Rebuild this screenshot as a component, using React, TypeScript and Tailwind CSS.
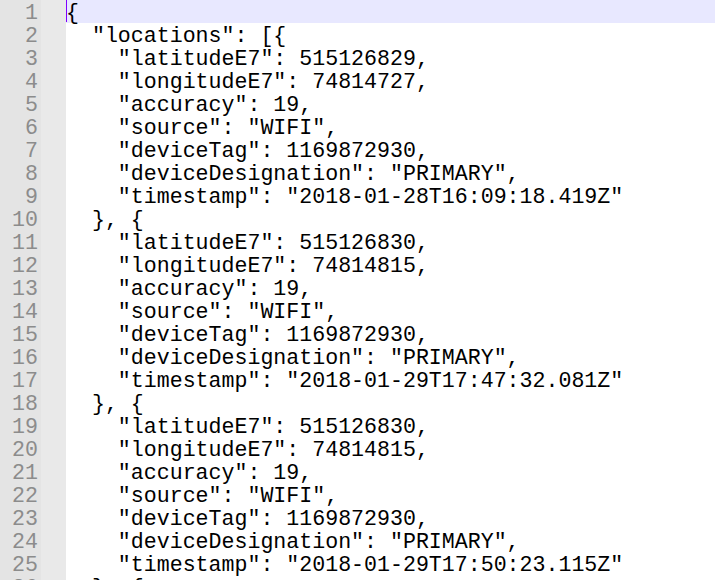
import React from "react";

const lines = [
  "{",
  '  "locations": [{',
  '    "latitudeE7": 515126829,',
  '    "longitudeE7": 74814727,',
  '    "accuracy": 19,',
  '    "source": "WIFI",',
  '    "deviceTag": 1169872930,',
  '    "deviceDesignation": "PRIMARY",',
  '    "timestamp": "2018-01-28T16:09:18.419Z"',
  "  }, {",
  '    "latitudeE7": 515126830,',
  '    "longitudeE7": 74814815,',
  '    "accuracy": 19,',
  '    "source": "WIFI",',
  '    "deviceTag": 1169872930,',
  '    "deviceDesignation": "PRIMARY",',
  '    "timestamp": "2018-01-29T17:47:32.081Z"',
  "  }, {",
  '    "latitudeE7": 515126830,',
  '    "longitudeE7": 74814815,',
  '    "accuracy": 19,',
  '    "source": "WIFI",',
  '    "deviceTag": 1169872930,',
  '    "deviceDesignation": "PRIMARY",',
  '    "timestamp": "2018-01-29T17:50:23.115Z"',
  "  }, {",
];

export default function App() {
  return (
    <div className="flex h-[580px] w-[715px] overflow-hidden bg-white font-['Liberation_Mono','Courier_New',monospace] text-[21.6px]">
      {/* line numbers */}
      <div className="flex w-[41px] shrink-0 flex-col bg-[#e4e4e4] pr-[3px] text-right text-[#8c8c8c]">
        {lines.map((_, i) => (
          <div key={i} className="h-[23px] shrink-0 pt-[4px] leading-[19px]">
            {i + 1}
          </div>
        ))}
      </div>
      {/* fold margin */}
      <div className="w-[25px] shrink-0 bg-[#e9e9e9]" />
      {/* code */}
      <div className="flex min-w-0 flex-1 flex-col text-black">
        {lines.map((line, i) => (
          <div
            key={i}
            className={
              i === 0
                ? "relative h-[23px] shrink-0 whitespace-pre bg-[#e8e8ff] pt-[4px] leading-[19px]"
                : "h-[23px] shrink-0 whitespace-pre pt-[4px] leading-[19px]"
            }
          >
            {i === 0 && <span className="absolute left-0 top-0 h-[22px] w-px bg-[#8000ff]" />}
            {line}
          </div>
        ))}
      </div>
    </div>
  );
}
